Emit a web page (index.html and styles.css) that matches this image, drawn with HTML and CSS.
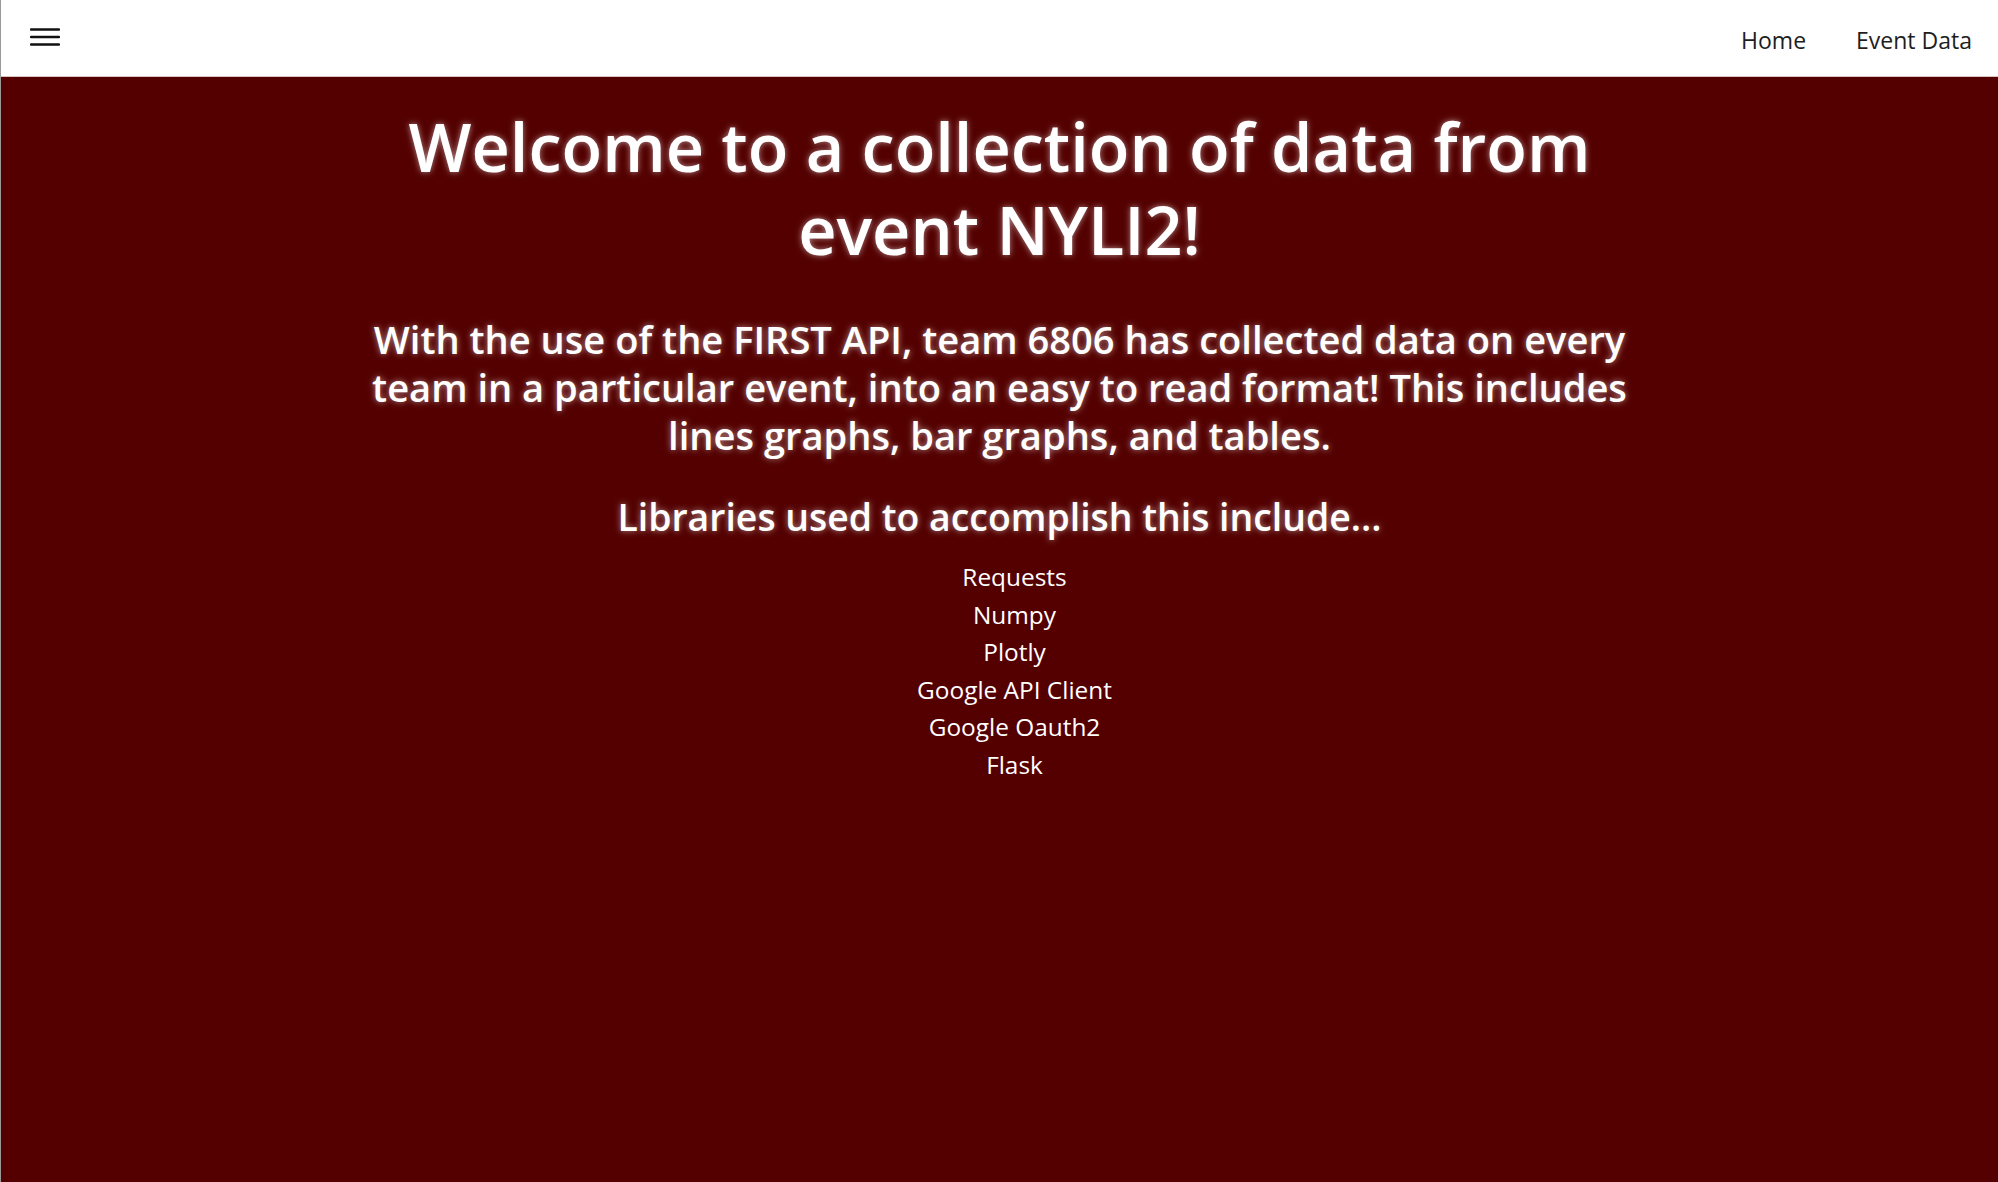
FILE: index.html
```html
<!DOCTYPE html>
<html lang="en">
<head>
<meta charset="utf-8">
<title>NYLI2 Event Data</title>
<link rel="stylesheet" href="styles.css">
</head>
<body>
<header class="topbar">
  <button class="menu-btn" aria-label="Menu">
    <svg width="30" height="18" viewBox="0 0 30 18"><path d="M1 1.5h28M1 9h28M1 16.5h28" stroke="#111" stroke-width="2.4" stroke-linecap="round" fill="none"/></svg>
  </button>
  <nav class="nav">
    <a href="#" class="nav-link">Home</a>
    <a href="#" class="nav-link">Event Data</a>
  </nav>
</header>
<main class="content">
  <h1 class="title">Welcome to a collection of data from<br>event NYLI2!</h1>
  <h2 class="intro">With the use of the FIRST API, team 6806 has collected data on every team in a particular event, into an easy to read format! This includes lines graphs, bar graphs, and tables.</h2>
  <h3 class="libs-heading">Libraries used to accomplish this include...</h3>
  <ul class="libs">
    <li>Requests</li>
    <li>Numpy</li>
    <li>Plotly</li>
    <li>Google API Client</li>
    <li>Google Oauth2</li>
    <li>Flask</li>
  </ul>
</main>
</body>
</html>
```
FILE: styles.css
```css
html, body {
  margin: 0;
  padding: 0;
  height: 100%;
}
body {
  background: #540000;
  font-family: "Open Sans", "Noto Sans", sans-serif;
  border-left: 1px solid #9a9a9a;
  box-sizing: border-box;
  min-height: 100vh;
}
.topbar {
  height: 77px;
  background: #ffffff;
  display: flex;
  align-items: center;
  justify-content: space-between;
  padding: 0 26px 0 29px;
  box-sizing: border-box;
  border-bottom: 1px solid #d9c4c4;
}
.menu-btn {
  background: none;
  border: 0;
  padding: 0;
  display: flex;
  margin-top: -2px;
}
.nav {
  display: flex;
  gap: 50px;
  padding-top: 4px;
}
.nav-link {
  color: #1e1e1e;
  text-decoration: none;
  font-size: 23px;
}
.content {
  text-align: center;
  color: #ffffff;
  padding: 0 200px;
}
.title, .intro, .libs-heading {
  text-shadow: 0 0 6px rgba(255,255,255,0.55);
  font-weight: 600;
}
.title {
  font-size: 66.6px;
  line-height: 83px;
  margin: 28px 0 0;
}
.intro {
  font-size: 38.1px;
  line-height: 48px;
  max-width: 1300px;
  margin: 44px auto 0;
}
.libs-heading {
  font-size: 37.4px;
  line-height: 48px;
  margin: 34px 0 0;
}
.libs {
  list-style: none;
  margin: 17px 0 0;
  padding-left: 30px;
  font-size: 24.4px;
  line-height: 37.5px;
}
```
